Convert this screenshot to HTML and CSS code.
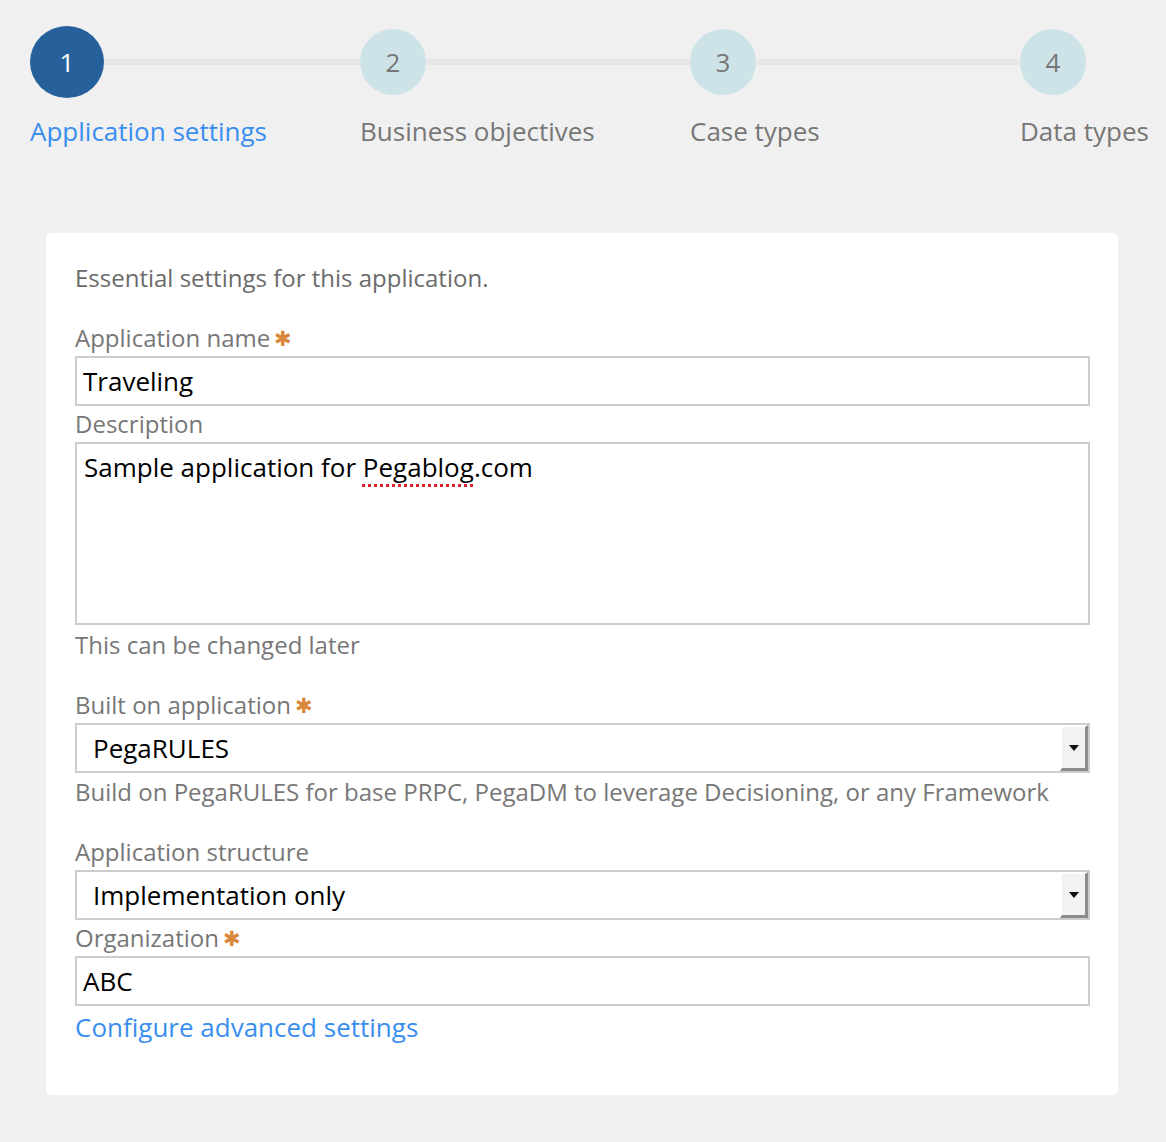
FILE: index.html
```html
<!DOCTYPE html>
<html>
<head>
<meta charset="utf-8">
<link rel="stylesheet" href="styles.css">
</head>
<body>
<div class="stepper">
  <div class="step active">
    <div class="step-top"><div class="circle">1</div><div class="line"></div></div>
    <div class="step-label">Application settings</div>
  </div>
  <div class="step">
    <div class="step-top"><div class="circle">2</div><div class="line"></div></div>
    <div class="step-label">Business objectives</div>
  </div>
  <div class="step">
    <div class="step-top"><div class="circle">3</div><div class="line"></div></div>
    <div class="step-label">Case types</div>
  </div>
  <div class="step last">
    <div class="step-top"><div class="circle">4</div></div>
    <div class="step-label">Data types</div>
  </div>
</div>

<div class="card">
  <p class="intro">Essential settings for this application.</p>

  <div class="label first">Application name<span class="req">&#10033;</span></div>
  <div class="input">Traveling</div>

  <div class="label tight">Description</div>
  <div class="textarea">Sample application for <span class="spell">Pegablog</span>.com</div>
  <div class="help after-area">This can be changed later</div>

  <div class="label">Built on application<span class="req">&#10033;</span></div>
  <div class="select"><span class="sel-text">PegaRULES</span><span class="sel-btn"><svg width="10" height="6" viewBox="0 0 10 6"><path d="M0 0H10L5 6Z" fill="#111"/></svg></span></div>
  <div class="help">Build on PegaRULES for base PRPC, PegaDM to leverage Decisioning, or any Framework</div>

  <div class="label">Application structure</div>
  <div class="select"><span class="sel-text">Implementation only</span><span class="sel-btn"><svg width="10" height="6" viewBox="0 0 10 6"><path d="M0 0H10L5 6Z" fill="#111"/></svg></span></div>

  <div class="label tight">Organization<span class="req">&#10033;</span></div>
  <div class="input">ABC</div>
  <a class="link" href="#">Configure advanced settings</a>
</div>
</body>
</html>
```
FILE: styles.css
```css
html, body {
  margin: 0;
  padding: 0;
  background: #f0f0f0;
  font-family: "Open Sans", "Liberation Sans", sans-serif;
}

.stepper {
  display: flex;
  padding: 26px 0 0 30px;
  height: 207px;
  box-sizing: border-box;
}

.step {
  width: 330px;
  flex: none;
}

.step.last {
  width: 136px;
}

.step-top {
  display: flex;
  align-items: center;
  height: 72px;
}

.circle {
  width: 66px;
  height: 66px;
  border-radius: 50%;
  background: #cde3e8;
  color: #777;
  font-size: 26px;
  display: flex;
  align-items: center;
  justify-content: center;
  flex: none;
}

.step.active .circle {
  width: 74px;
  height: 72px;
  background: #26619b;
  color: #fff;
}

.line {
  flex: 1;
  height: 6px;
  background: #e6e6e6;
}

.step-label {
  margin-top: 16px;
  font-size: 26px;
  line-height: 34px;
  color: #777;
  white-space: nowrap;
}

.step.active .step-label {
  color: #3a8eef;
}

.card {
  margin: 26px 48px 0 46px;
  background: #fff;
  border-radius: 5px;
  padding: 30px 28px 53px 29px;
}

.intro {
  margin: 0;
  font-size: 24px;
  line-height: 30px;
  color: #6b6b6b;
}

.label {
  margin-top: 30px;
  font-size: 24px;
  line-height: 30px;
  color: #777;
  margin-bottom: 3px;
}

.label.tight {
  margin-top: 3px;
}

.req {
  color: #d9873b;
  font-size: 21px;
  margin-left: 4px;
  vertical-align: 1px;
}

.input, .textarea, .select {
  border: 2px solid #cdcdcd;
  background: #fff;
  color: #000;
  font-size: 26px;
  box-sizing: border-box;
}

.input {
  height: 50px;
  line-height: 46px;
  padding-left: 6px;
}

.textarea {
  height: 183px;
  line-height: 46px;
  padding: 0 0 0 7px;
}

.spell {
  text-decoration: underline dotted #e0202a;
  text-decoration-thickness: 3px;
  text-underline-offset: 7px;
}

.select {
  height: 50px;
  display: flex;
  align-items: stretch;
}

.sel-text {
  flex: 1;
  line-height: 46px;
  padding-left: 16px;
}

.sel-btn {
  width: 28px;
  background: #f2f2f2;
  border-left: 2px solid #fff;
  border-top: 2px solid #fff;
  border-right: 3px solid #8c8c8c;
  border-bottom: 3px solid #8c8c8c;
  box-sizing: border-box;
  display: flex;
  align-items: center;
  justify-content: center;
  margin: 0;
}

.help {
  margin-top: 4px;
  font-size: 24px;
  line-height: 30px;
  color: #777;
}

.help.after-area {
  margin-top: 5px;
}

.link {
  display: block;
  margin-top: 6px;
  font-size: 26px;
  line-height: 30px;
  color: #3a8eef;
  text-decoration: none;
}
```
